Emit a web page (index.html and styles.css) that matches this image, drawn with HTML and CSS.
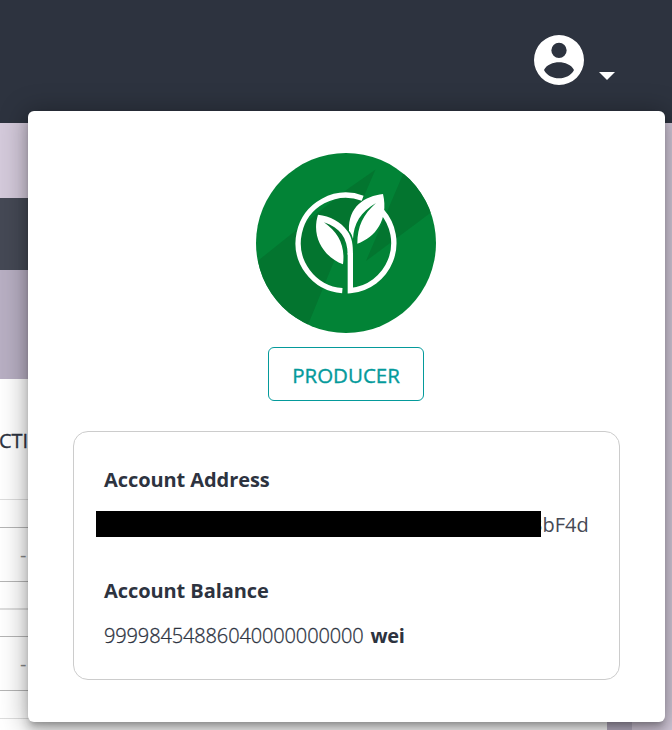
FILE: index.html
```html
<!DOCTYPE html>
<html lang="en">
<head>
<meta charset="utf-8">
<title>Account</title>
<link rel="stylesheet" href="styles.css">
</head>
<body>
<header class="topbar">
  <svg class="avatar" viewBox="0 0 150 150"><path fill="#fff" fill-rule="evenodd" d="M75 0a75 75 0 1 1 0 150a75 75 0 1 1 0-150zM75 23a23 23 0 1 0 0 46a23 23 0 1 0 0-46zM30 105C37 90 58 82 75 82s38 8 45 23C112 121 94 130 75 130s-37-9-45-25z"/></svg>
  <svg class="caret" viewBox="0 0 16 8"><path fill="#fff" d="M0 0h16l-8 8z"/></svg>
</header>
<main class="page">
  <div class="tabs"></div>
  <div class="panel">
    <div class="table">
      <div class="thead">CTI</div>
      <div class="gap"></div>
      <div class="row">-</div>
      <div class="gap"></div>
      <div class="gap second"></div>
      <div class="row">-</div>
      <div class="gap last"></div>
    </div>
  </div>
</main>
<section class="popover">
  <svg class="logo" viewBox="30 30 540 540">
    <defs><clipPath id="disc"><circle cx="300" cy="300" r="270"/></clipPath></defs>
    <g clip-path="url(#disc)">
      <path fill="#028336" d="M30 30h540v540H30z"/>
      <path fill="#03752f" d="M30 358L302 140L388 80L330 216L262 360L186 545L170 580H20zM471 94L360 354L580 190V80z"/>
    </g>
    <path fill="none" stroke="#fff" stroke-width="16" d="M289 443.100A143.500 143.500 0 1 1 350 165.500M407 204.400A143.500 143.500 0 0 1 313 442.900V330"/>
    <path fill="#fff" d="M216 215C252 219 285 236 304 264C319 285 321 305 321 335H305C305 286 282 254 234 238C278 270 298 308 291 364C237 344 194 285 216 215z"/>
    <path fill="#fff" d="M411 153C357 159 306 190 309 263C315 270 319 278 321 288C323 243 344 206 390 180C351 215 334 250 334 302C387 284 429 231 411 153z"/>
  </svg>
  <div class="role">PRODUCER</div>
  <div class="details">
    <h2>Account Address</h2>
    <div class="address"><span class="mask"></span><span class="tail">3bF4d</span></div>
    <h2>Account Balance</h2>
    <div class="balance"><span class="amount">99998454886040000000000</span><b>wei</b></div>
  </div>
</section>
</body>
</html>
```
FILE: styles.css
```css
* { box-sizing: border-box; }
body {
  margin: 0;
  height: 730px;
  overflow: hidden;
  position: relative;
  background: #d4cadb;
  color: #2d333f;
  font: 20px/28px "Open Sans", "Noto Sans", sans-serif;
}
svg { display: block; }
.topbar {
  height: 123px;
  padding: 35px 57px 0 0;
  display: flex;
  justify-content: flex-end;
  background: #2d333f;
}
.avatar { width: 50px; height: 50px; }
.caret { width: 16px; height: 8px; margin: 37px 0 0 15px; }
.page { padding-top: 75px; width: 632px; }
.tabs { height: 72px; background: #454955; }
.panel { height: 460px; padding-top: 109px; background: #b8afc3; }
.table { width: 607px; height: 351px; background: #fff; }
.thead {
  height: 121px;
  padding-top: 48px;
  border-bottom: 1px solid #ddd;
  text-indent: -1px;
  -webkit-text-stroke: 0.3px;
}
.gap { height: 27px; }
.gap.second { height: 28px; margin-top: -1px; border-top: 2px solid #ddd; }
.gap.last { height: 28px; border-bottom: 1px solid #ddd; }
.row {
  height: 55px;
  padding: 13px 0 0 20px;
  border-top: 1px solid #b5b5b5;
  border-bottom: 1px solid #b5b5b5;
  color: #888;
}
.popover {
  position: absolute;
  left: 28px;
  top: 111px;
  width: 637px;
  height: 611px;
  padding: 42px 45px;
  border-radius: 6px;
  background: #fff;
  display: flex;
  flex-direction: column;
  align-items: center;
  box-shadow: 0 5px 5px -3px rgba(0,0,0,.2), 0 8px 10px 1px rgba(0,0,0,.14), 0 3px 26px 4px rgba(0,0,0,.28);
}
.logo { width: 180px; height: 180px; margin-right: 1px; }
.role {
  width: 156px;
  height: 54px;
  margin: 14px 1px 0 0;
  border: 1px solid #049a9b;
  border-radius: 6px;
  color: #049a9b;
  font-size: 20.5px;
  line-height: 55px;
  text-align: center;
  -webkit-text-stroke: 0.35px;
}
.details {
  width: 547px;
  height: 249px;
  margin-top: 30px;
  padding: 34px 30px 0;
  border: 1px solid #ccc;
  border-radius: 15px;
}
h2 {
  margin: 0;
  font-size: 20px;
  line-height: 28px;
  font-weight: 700;
  letter-spacing: -0.08px;
}
.address {
  display: flex;
  height: 26px;
  margin: 17px 0 40px -8px;
}
.mask {
  position: relative;
  z-index: 1;
  flex: none;
  width: 445px;
  background: #000;
}
.tail {
  margin-left: -10px;
  line-height: 28px;
  color: #454955;
}
.balance { display: flex; gap: 7px; margin-top: 17px; }
.amount { font-weight: 300; letter-spacing: -0.13px; -webkit-text-stroke: 0.3px; }
.balance b { letter-spacing: -0.4px; }
```
